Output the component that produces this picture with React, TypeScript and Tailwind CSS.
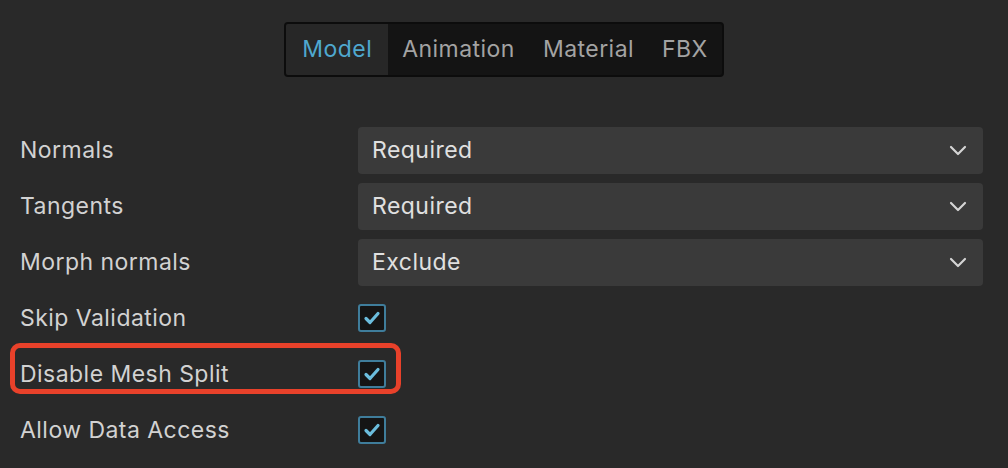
import React from 'react';

const font = { fontFamily: 'Inter, "Noto Sans", "Liberation Sans", sans-serif' };

function Chevron() {
  return (
    <svg width="18" height="11" viewBox="0 0 18 11" fill="none">
      <path d="M2 2l7 7 7-7" stroke="#d4d4d4" strokeWidth="2.2" strokeLinecap="round" strokeLinejoin="round" />
    </svg>
  );
}

function Select({ value }: { value: string }) {
  return (
    <div className="flex-1 h-[47px] rounded-[4px] bg-[#3a3a3a] flex items-center justify-between pl-[14px] pr-[16px]">
      <span className="text-[23px] tracking-[0.02em] text-[#e0e0e0]">{value}</span>
      <Chevron />
    </div>
  );
}

function Check() {
  return (
    <div className="w-[28px] h-[28px] rounded-[3px] border-2 border-[#3f7d9b] bg-[#151515] flex items-center justify-center">
      <svg width="18" height="16" viewBox="0 0 18 16" fill="none">
        <path d="M3 8.5l4 4 8-9" stroke="#6bbddd" strokeWidth="3.2" strokeLinecap="round" strokeLinejoin="round" />
      </svg>
    </div>
  );
}

const tabs = ['Model', 'Animation', 'Material', 'FBX'];

export default function App() {
  return (
    <div className="w-[1008px] h-[468px] bg-[#292929] overflow-hidden" style={font}>
      {/* Tabs */}
      <div className="flex justify-center pt-[22px]">
        <div className="flex h-[55px] rounded-[4px] border-2 border-[#0c0c0c] bg-[#141414] overflow-hidden">
          {tabs.map((t, i) => (
            <div
              key={t}
              className={
                i === 0
                  ? 'flex items-center px-[16px] text-[23px] tracking-[0.02em] bg-[#272727] text-[#4fa8cf]'
                  : 'flex items-center px-[14px] text-[23px] tracking-[0.02em] text-[#a3a3a3]'
              }
            >
              {t}
            </div>
          ))}
        </div>
      </div>

      {/* Properties */}
      <div className="flex flex-col mt-[45px] pl-[20px] pr-[25px]">
        {[
          { label: 'Normals', value: 'Required' },
          { label: 'Tangents', value: 'Required' },
          { label: 'Morph normals', value: 'Exclude' },
        ].map(r => (
          <div key={r.label} className="flex items-center h-[56px]">
            <span className="w-[338px] text-[23px] tracking-[0.02em] text-[#d2d2d2]">{r.label}</span>
            <Select value={r.value} />
          </div>
        ))}
        {['Skip Validation', 'Disable Mesh Split', 'Allow Data Access'].map((l, i) => (
          <div key={l} className="relative flex items-center h-[56px]">
            {i === 1 && (
              <div className="absolute left-[-10px] top-[-3px] w-[391px] h-[51px] rounded-[10px] border-[5px] border-[#e8412a]" />
            )}
            <span className="w-[338px] text-[23px] tracking-[0.02em] text-[#d2d2d2]">{l}</span>
            <Check />
          </div>
        ))}
      </div>
    </div>
  );
}
